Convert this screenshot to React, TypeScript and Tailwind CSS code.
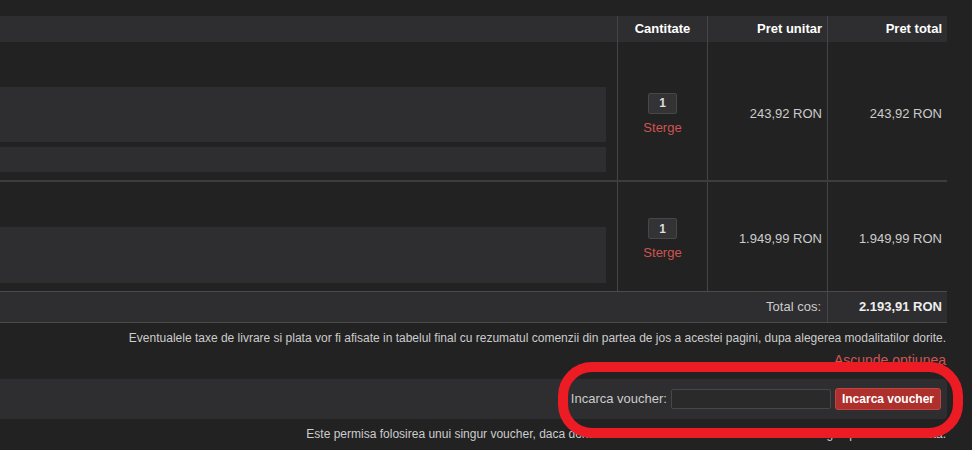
import React from "react";

const PriceCell = ({ children, w, border = true }: { children: React.ReactNode; w: string; border?: boolean }) => (
  <div className={`${w} ${border ? "border-r border-[#454545]" : ""} flex items-center justify-end pr-[5px] pt-[5px]`}>{children}</div>
);

const Qty = () => (
  <div className="w-[90px] border-r border-[#454545] flex flex-col items-center justify-center pt-[6px]">
    <div className="w-[29px] h-[21px] bg-[#333335] border border-[#474747] rounded-[2px] flex items-center justify-center text-[12px] font-bold text-[#dddddd]">
      1
    </div>
    <div className="mt-[6px] text-[13px] leading-[16px] text-[#cf5450]">Sterge</div>
  </div>
);

export default function App() {
  return (
    <div className="relative min-h-[450px] overflow-hidden bg-[#222222] pt-4 text-[13px] text-[#cccccc] font-['Liberation_Sans',Arial,sans-serif]">
      <div className="w-[947px]">
        {/* header */}
        <div className="flex h-[26px] bg-[#2e2e30] font-bold text-white">
          <div className="w-[618px] border-r border-[#454545]" />
          <div className="w-[90px] border-r border-[#454545] flex items-center justify-center">Cantitate</div>
          <div className="w-[120px] border-r border-[#454545] flex items-center justify-end pr-[5px]">Pret unitar</div>
          <div className="w-[119px] flex items-center justify-end pr-[5px]">Pret total</div>
        </div>
        {/* row 1 */}
        <div className="flex h-[140px] border-b-2 border-[#3d3d3d]">
          <div className="w-[618px] border-r border-[#454545] flex flex-col justify-end gap-[5px] pb-[8px] pr-[11px]">
            <div className="h-[55px] bg-[#2e2e30]" />
            <div className="h-[25px] bg-[#2e2e30]" />
          </div>
          <Qty />
          <PriceCell w="w-[120px]">243,92 RON</PriceCell>
          <PriceCell w="w-[119px]" border={false}>243,92 RON</PriceCell>
        </div>
        {/* row 2 */}
        <div className="flex h-[110px] border-b border-[#4a4a4a]">
          <div className="w-[618px] border-r border-[#454545] flex flex-col justify-end pb-[8px] pr-[11px]">
            <div className="h-[56px] bg-[#2e2e30]" />
          </div>
          <Qty />
          <PriceCell w="w-[120px]">1.949,99 RON</PriceCell>
          <PriceCell w="w-[119px]" border={false}>1.949,99 RON</PriceCell>
        </div>
        {/* total */}
        <div className="flex h-[31px] bg-[#2e2e30] border-b border-[#4a4a4a]">
          <div className="w-[828px] border-r border-[#454545] flex items-center justify-end pr-[6px]">Total cos:</div>
          <div className="w-[119px] flex items-center justify-end pr-[5px] font-bold text-[#eeeeee]">2.193,91 RON</div>
        </div>

        <p className="mt-[8px] text-right text-[12px] leading-[14px] pr-[1px]">
          Eventualele taxe de livrare si plata vor fi afisate in tabelul final cu rezumatul comenzii din partea de jos a acestei pagini, dupa alegerea modalitatilor dorite.
        </p>
        <div className="mt-[6px] text-right text-[14px] leading-[18px] text-[#cf5450] pr-[1px]">Ascunde optiunea</div>

        {/* voucher bar */}
        <div className="mt-[10px] flex h-[40px] items-center justify-end gap-[4px] rounded-r-[4px] bg-[#2e2e30] pr-[6px]">
          <span className="text-[13px] text-[#cccccc]">Incarca voucher:</span>
          <input className="h-[20px] w-[160px] rounded-[2px] border border-[#474747] bg-[#2a2a2b] outline-none" />
          <button className="h-[22px] rounded-[3px] border border-[#c2433f] bg-[#ad302d] px-[6px] text-[12px] font-bold text-white">
            Incarca voucher
          </button>
        </div>

        <p className="mt-[8px] text-right text-[12px] leading-[14px] pr-[1px]">
          Este permisa folosirea unui singur voucher, daca doriti sa utilizati un alt voucher va trebui sa il stergeti pe cel care exista.
        </p>
      </div>

      {/* red annotation */}
      <div className="pointer-events-none absolute left-[558px] top-[362px] h-[76px] w-[405px] rounded-[34px] border-[10px] border-[#ed1c24]" />
    </div>
  );
}
